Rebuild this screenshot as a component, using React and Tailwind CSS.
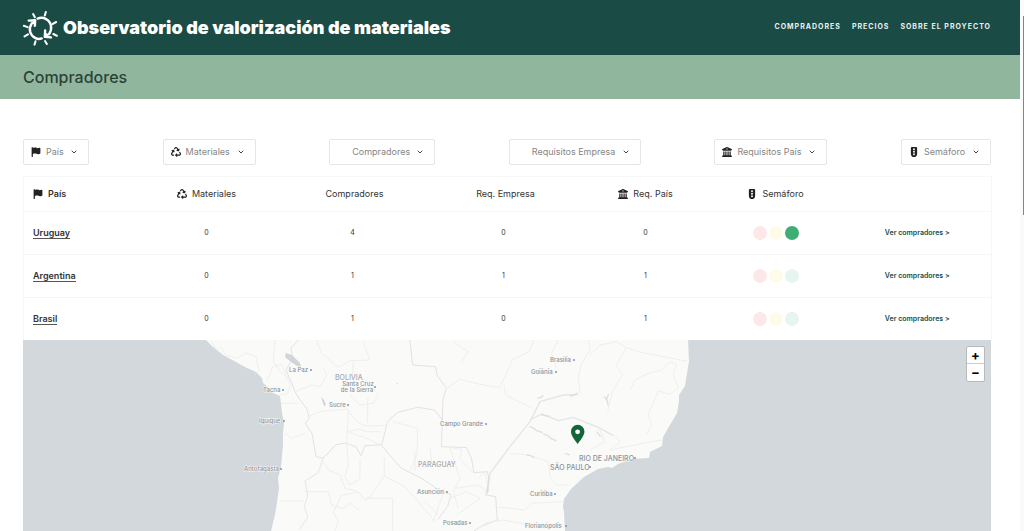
import React from "react";
import { FaFlag, FaRecycle, FaBuildingColumns, FaTrafficLight } from "react-icons/fa6";
import { FiChevronDown } from "react-icons/fi";

const filters = [
  { id: "pais", label: "País", icon: FaFlag },
  { id: "materiales", label: "Materiales", icon: FaRecycle },
  { id: "compradores", label: "Compradores" },
  { id: "req-empresa", label: "Requisitos Empresa" },
  { id: "req-pais", label: "Requisitos País", icon: FaBuildingColumns },
  { id: "semaforo", label: "Semáforo", icon: FaTrafficLight },
];

const rows = [
  { name: "Uruguay", values: [0, 4, 0, 0], green: true },
  { name: "Argentina", values: [0, 1, 1, 1], green: false },
  { name: "Brasil", values: [0, 1, 0, 1], green: false },
];

const places = [
  { name: "La Paz", x: 289, y: 372, w: 20 },
  { name: "Tacna", x: 263, y: 392, w: 18 },
  { name: "Iquique", x: 259, y: 423, w: 23 },
  { name: "Antofagasta", x: 244, y: 471, w: 35 },
  { name: "Sucre", x: 329, y: 407, w: 17 },
  { name: "Campo Grande", x: 440, y: 426, w: 44 },
  { name: "Brasília", x: 550, y: 362, w: 22 },
  { name: "Goiânia", x: 531, y: 374, w: 23 },
  { name: "Asunción", x: 417, y: 494, w: 28 },
  { name: "Curitiba", x: 530, y: 496, w: 23 },
  { name: "Posadas", x: 443, y: 525, w: 25 },
  { name: "Florianópolis", x: 525, y: 528, w: 39 },
];

function Logo() {
  return (
    <svg viewBox="0 0 102 105" className="h-9 w-9 shrink-0" fill="none" stroke="#fff" strokeWidth="6" strokeLinecap="round" aria-hidden="true">
      <path d="M68 6l-3 10M31 12l5 9M4 46l11 4M6 77l10-6M35 101l3-10M66 91l5 8M90 70l10 5M87 41l11-6" />
      <path d="M44 25c18-7 36 4 39 21 2 10-1 18-6 25M27 39c-11 17-5 36 11 43 6 3 12 3 18 1" strokeWidth="7" />
      <path d="M18 31l19-1-1 16M66 60l-1 18 18 2" strokeWidth="7" strokeLinejoin="round" />
      <path d="M27 39l9-8v9zM76 72l-10 6v-10z" fill="#fff" strokeWidth="3" />
    </svg>
  );
}

function Filter({ id, label, icon: Icon }) {
  return (
    <div className="relative flex h-[26px] items-center rounded-xs border border-[#e6e6e6] bg-white">
      <label htmlFor={id} className="pointer-events-none absolute left-[7px] flex w-[10px] justify-center text-[#222]">
        {Icon && <Icon size={10} />}
      </label>
      <select id={id} aria-label={label} className="h-5 appearance-none bg-transparent pr-6 pl-[22px] text-[9px] leading-4 text-[#858585] outline-none">
        <option>{label}</option>
      </select>
      <FiChevronDown size={8} strokeWidth={3} className="pointer-events-none absolute right-[10px] text-[#444]" />
    </div>
  );
}

function Head({ icon: Icon, children, className = "justify-center" }) {
  return (
    <span className={"flex items-center gap-[5px] " + className}>
      {Icon && <Icon size={10} className="text-[#222]" />}
      {children}
    </span>
  );
}

function MapDrawing() {
  return (
    <svg viewBox="23 340 968 191" preserveAspectRatio="xMidYMid slice" className="block h-[191px] w-full bg-[#d2d8db]" role="img" aria-label="Mapa de compradores">
      <path
        fill="#fafaf8"
        d="M206 340l6 6 11 9 11 6 13 7 9 4 6 6 1 5 5 4 3 5 9 4 1 8 1 9 2 10-1 10v12l-2 22-3 11 1 10-2 14-2 13-4 16h294l-1-19-1-6 1-7 7-10 13-12 14-8 10-2 4 1 6-4 14-5 17-1 1-6 12-6 1-9 4-7 10-17 2-12v-6l6-9 4-25-1-22z"
      />
      <g fill="none" stroke="#ececec" strokeWidth="2.5" strokeLinejoin="round" transform="translate(180 335) scale(.3333)">
        <path stroke="#e9dfe2" strokeWidth="3" d="M345 170l-12-30-15-35 20-35-5-30 22-25M345 170l15 25 20 25 8 30-12 15 20 30 12 70 22 4 38-40 30-5 30 12 15 26 12-30 48-3 25 30 35 40 60 30 60 40 30 10-10 35-30 40M605 330l18-70 30-28 60-15 50 8 25 30" />
        <path stroke="#e9dfe2" d="M430 368l-15 45-40 25 8 45-10 30 10 35-25 35" />
        <path d="M95 20l15 25 15-8 12 24 35 8 25-15 30 10 10 42-15 12M285 15l-5 65 20 30 25 20M260 140l18-45 27-8 15 38 12 25-8 25-22 5M410 15l15 40 50 42 35-20 60-2-20-55M520 80l-3 40 50 20 28 40-15 25-40 5-30-30M345 170l50-20 25 5 20-35-10-20M388 243l40-15 75-5 30 40 25 10 60-2 18-28M563 190v75M505 225l-5 100M500 290l40-8 20 8 45 0M503 290l55 20 45 20M305 205h50M315 295l20 15 40-15M613 368v55l-43 63-15 10-20-25-50 10-25 50 15 30-10 27M540 372v60l-30 18-15-25 10-35-5-62M430 380l15 25 35 15 15 40 35 8M375 470l70 0 10 40 35 10 20-15 28 20M556 490h82v98M300 498h70M638 260l75 20-2 80-20 48M613 423l60 30 40 45 50 60" />
      </g>
      <g fill="none" stroke="#ececec" strokeWidth="2.5" strokeLinejoin="round" transform="translate(400 335) scale(.3333)">
        <path stroke="#e9dfe2" strokeWidth="3" d="M30 15l8 75 68 5 5 25 28 40-10 35-5 140 75 3 15 30 8 45 40-3 5 20-10 50 30 5 5 70-50 20-20 13" />
        <path stroke="#e4e5e6" strokeWidth="4" d="M262 475l8-60 60-80 60-75 30-60 70-20 45-2M390 255l35-18 50 20 45-10 75 30 45 25" />
        <path d="M140 160l40-27 60 15 60 10 12-28 25-55 50-25 15-35M185 80l20-30-45-30M312 150l5 30 75 38M475 15l-20 40 15 45M540 175l-5-50 10-40 25-40-5-30M570 60l30-30 50-10 28 18-30 55 20 25-30 50-15 60M678 38l50 15 130 25M690 165l15-30 40-20 40-10 25-25 20 8-10 30 15 40-25 20-35-10-30 70 10 30-15 30M595 275l20 45-45 25M640 298l20 22-30 25 100-20 55-10M330 355l55 5 60 20 5 45 20 25 35 0M285 515l90 10 20-20 95-5M150 340l30 90-20 40 15 50M185 343l-5 30 40 40M165 460l70-10 25 20M150 490l50-20 40 20-70 50M100 560l35-100M235 430l20-20 12 60M160 340l25 3M225 588l35-25 50-8 65 12M45 350v60M90 340l5 40-25 20M75 500l40 40" />
        <path stroke="#dde0e1" strokeWidth="4" d="M388 275l12 4 10 8 18 6M430 297l14 5 8 8 18 8M413 190l12-4 5-5M510 183l12-2 10-7M612 185l10 12 2 12-4-18 6-14M590 290l12 15M380 360l12 2 10 6M425 240l25 4M262 475l5-50M495 355l15 5" />
      </g>
      <g fill="#d0d5d9">
        <path d="M286 353l6 2 8 8 1 4-4-1-6-4-6-5zM321 397l3 3 2 5-2 1zM396 383h2v1z" />
      </g>
      <g fontFamily="Inter, 'Open Sans', sans-serif" fontWeight="500" fill="#8b939c" stroke="#fafaf8" strokeWidth="1" paintOrder="stroke" fontSize="6">
        {places.map((p) => (
          <g key={p.name}>
            <text x={p.x} y={p.y}>{p.name}</text>
            <circle cx={p.x + p.w + 2} cy={p.y - 2} r="1" stroke="none" />
          </g>
        ))}
        <text x="358" y="386" textAnchor="middle">Santa Cruz</text>
        <text x="357" y="392" textAnchor="middle">de la Sierra</text>
        <circle cx="375" cy="387" r="1" stroke="none" />
        <g fontSize="7">
          <text x="335" y="380" fill="#a4a9b2">BOLIVIA</text>
          <text x="418" y="467" fill="#a4a9b2">PARAGUAY</text>
          <text x="579" y="461">RIO DE JANEIRO</text>
          <text x="550" y="470">SÃO PAULO</text>
        </g>
        <circle cx="635" cy="458" r="1" stroke="none" />
        <circle cx="590" cy="467" r="1" stroke="none" />
      </g>
      <path fill="#15653a" d="M577.6 444C573 438 571 434.500 571 431.500a6.700 6.700 0 0 1 13.400 0c0 3-2.200 6.500-6.800 12.500z" />
      <circle cx="577.6" cy="431.8" r="2.4" fill="#fff" />
    </svg>
  );
}

export default function App() {
  return (
    <div className="flex h-screen overflow-hidden bg-white font-[Inter,'Open_Sans',sans-serif] text-[#333]">
      <div className="min-w-0 flex-1">
        <header className="flex h-[55px] items-center justify-between bg-[#1b4b45] pr-[29px] pl-[22px]">
          <a href="#inicio" className="flex items-center gap-[5px] text-[18px] font-black whitespace-nowrap text-white">
            <Logo />
            Observatorio de valorización de materiales
          </a>
          <nav className="flex gap-[11px] text-[7px] font-bold tracking-[1px] whitespace-nowrap text-[#e8f2ee]">
            <a href="#compradores">COMPRADORES</a>
            <a href="#precios">PRECIOS</a>
            <a href="#proyecto">SOBRE EL PROYECTO</a>
          </nav>
        </header>
        <div className="flex h-11 items-center bg-[#90b79e] px-[23px]">
          <h1 className="text-[16px] font-medium text-[#2c4238]">Compradores</h1>
        </div>
        <main className="pt-10 pr-[29px] pl-[23px]">
          <div className="flex justify-between">
            {filters.map((f) => (
              <Filter key={f.id} {...f} />
            ))}
          </div>
          <table className="mt-[11px] w-full table-fixed border-collapse border border-[#f8f8f8] text-[9px]">
            <colgroup>
              <col className="w-[108px]" />
              <col className="w-[150px]" />
              <col className="w-[142px]" />
              <col className="w-[160px]" />
              <col className="w-[124px]" />
              <col className="w-[136px]" />
              <col className="w-[148px]" />
            </colgroup>
            <thead>
              <tr className="h-[35px] border-b border-[#f8f8f8]">
                <th className="pl-[9px] font-semibold"><Head icon={FaFlag} className="justify-start">País</Head></th>
                <th className="font-normal"><Head icon={FaRecycle}>Materiales</Head></th>
                <th className="pl-1 font-normal"><Head>Compradores</Head></th>
                <th className="pl-1 font-normal"><Head>Req. Empresa</Head></th>
                <th className="font-normal"><Head icon={FaBuildingColumns}>Req. País</Head></th>
                <th className="font-normal"><Head icon={FaTrafficLight}>Semáforo</Head></th>
                <td />
              </tr>
            </thead>
            <tbody>
              {rows.map((r) => (
                <tr key={r.name} className="h-[43px] border-b border-[#f6f6f6]">
                  <th className="pl-[9px] text-left font-semibold">
                    <a href="#pais" className="border-b border-[#555]">{r.name}</a>
                  </th>
                  {r.values.map((v, i) => (
                    <td key={i} className="text-center text-[7px]">{v}</td>
                  ))}
                  <td>
                    <div className="flex justify-center gap-[2px]">
                      <span className="size-[14px] rounded-full bg-[#fde8e9]" />
                      <span className="size-[14px] rounded-full bg-[#fefce8]" />
                      <span className={"size-[14px] rounded-full " + (r.green ? "bg-[#3fae74]" : "bg-[#e6f5ef]")} />
                    </div>
                  </td>
                  <td className="text-center text-[7px] font-semibold text-[#1b4b45]">
                    <a href="#ver">Ver compradores &gt;</a>
                  </td>
                </tr>
              ))}
            </tbody>
          </table>
          <div className="relative -mt-px">
            <MapDrawing />
            <div className="absolute top-[6px] right-[6px] flex w-[19px] flex-col overflow-hidden rounded-xs border border-[#b4babd] bg-white text-[13px] leading-none font-bold text-black">
              <button aria-label="Acercar" className="h-[17px] border-b border-[#ccc]">+</button>
              <button aria-label="Alejar" className="h-[17px]">−</button>
            </div>
          </div>
        </main>
      </div>
      <div className="flex w-1 justify-end bg-[#fafafa] pt-4">
        <div className="h-[199px] w-px bg-[#858585]" />
      </div>
    </div>
  );
}
